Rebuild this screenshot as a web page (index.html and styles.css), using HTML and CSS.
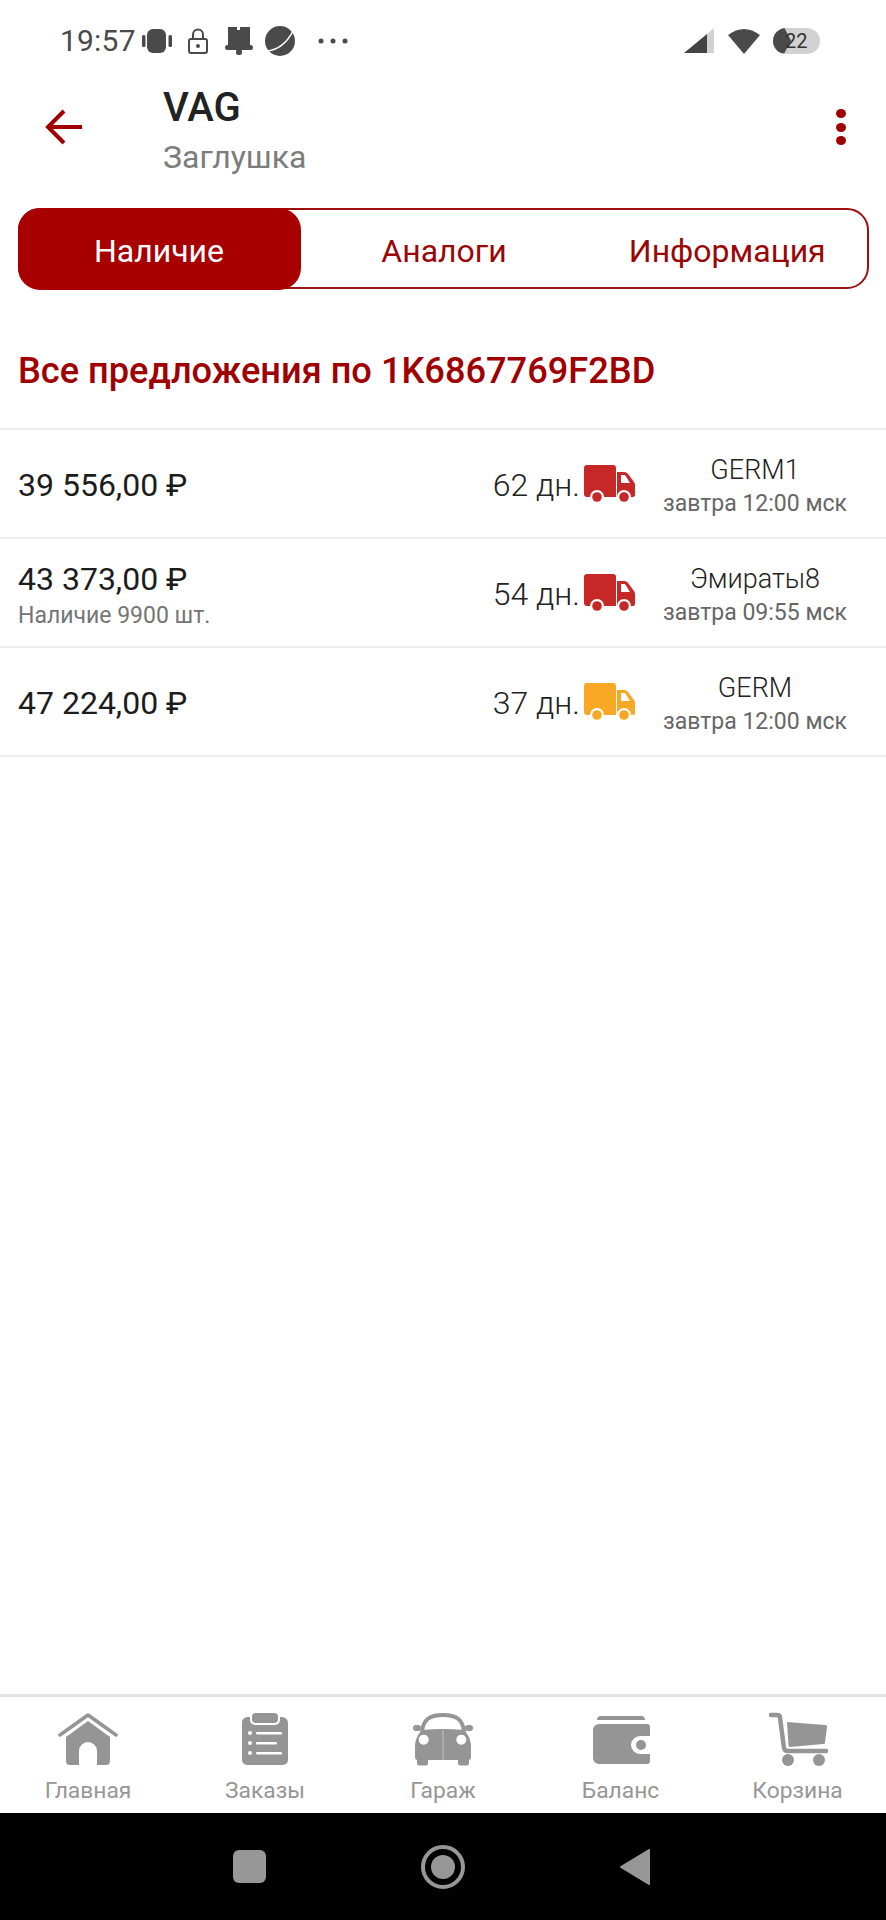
FILE: index.html
```html
<!DOCTYPE html>
<html lang="ru">
<head>
<meta charset="utf-8">
<title>VAG</title>
<link rel="stylesheet" href="styles.css">
</head>
<body>
<div class="page">
  <div class="status">
    <span class="time">19:57</span>
    <svg class="si" width="30" height="26" viewBox="0 0 30 26"><rect x="5" y="1" width="19" height="24" rx="6" fill="#4a4a4a"/><rect x="0" y="7" width="3.500" height="12" rx="1.500" fill="#4a4a4a"/><rect x="26.500" y="7" width="3.500" height="12" rx="1.500" fill="#4a4a4a"/></svg>
    <svg class="si lock" width="20" height="26" viewBox="0 0 20 26"><path d="M5 11V6.500a5 5 0 0 1 10 0V11" fill="none" stroke="#4a4a4a" stroke-width="2"/><rect x="1" y="11" width="18" height="14" rx="2" fill="none" stroke="#4a4a4a" stroke-width="2"/><circle cx="10" cy="18" r="2" fill="#4a4a4a"/></svg>
    <svg class="si bell" width="28" height="29" viewBox="0 0 28 29"><path d="M3 1h9v3h3V1h10v20H3z" fill="#4a4a4a"/><rect x="0" y="19" width="28" height="5" rx="2.500" fill="#4a4a4a"/><rect x="11" y="23" width="6" height="6" rx="2.500" fill="#4a4a4a"/></svg>
    <svg class="si planet" width="30" height="30" viewBox="0 0 30 30"><circle cx="15" cy="15" r="15" fill="#4a4a4a"/><path d="M1 25Q19 24 29 3" fill="none" stroke="#fff" stroke-width="1.600"/></svg>
    <svg class="si dots" width="30" height="6" viewBox="0 0 30 6"><circle cx="3" cy="3" r="2.500" fill="#4a4a4a"/><circle cx="15" cy="3" r="2.500" fill="#4a4a4a"/><circle cx="27" cy="3" r="2.500" fill="#4a4a4a"/></svg>
    <span class="spacer"></span>
    <svg width="30" height="26" viewBox="0 0 30 26"><path d="M0 25 23 6v19z" fill="#444"/><path d="M23 6l7-6v25h-7z" fill="#d2d2d2"/></svg>
    <svg class="wifi" width="32" height="26" viewBox="0 0 32 26"><path d="M0 7Q16-5 32 7L16 26z" fill="#4a4a4a"/></svg>
    <span class="battery"><span class="charge"></span><span class="level">22</span></span>
  </div>

  <header class="appbar">
    <svg class="back" width="38" height="36" viewBox="0 0 38 36"><path d="M37 18H3M19 2 3 18l16 16" fill="none" stroke="#a00000" stroke-width="4"/></svg>
    <div class="titles">
      <div class="title">VAG</div>
      <div class="subtitle">Заглушка</div>
    </div>
    <div class="more"><i></i><i></i><i></i></div>
  </header>

  <nav class="tabs">
    <div class="tab active">Наличие</div>
    <div class="tab">Аналоги</div>
    <div class="tab">Информация</div>
  </nav>

  <h1 class="heading">Все предложения по 1K6867769F2BD</h1>

  <section class="list">
    <div class="row">
      <div class="price"><div class="amount">39 556,00 ₽</div></div>
      <div class="days">62 дн.</div>
      <svg class="truck red" viewBox="0 0 51 37"><use href="#truck"/></svg>
      <div class="source"><div class="wh">GERM1</div><div class="when">завтра 12:00 мск</div></div>
    </div>
    <div class="row">
      <div class="price"><div class="amount">43 373,00 ₽</div><div class="stock">Наличие 9900 шт.</div></div>
      <div class="days">54 дн.</div>
      <svg class="truck red" viewBox="0 0 51 37"><use href="#truck"/></svg>
      <div class="source"><div class="wh">Эмираты8</div><div class="when">завтра 09:55 мск</div></div>
    </div>
    <div class="row">
      <div class="price"><div class="amount">47 224,00 ₽</div></div>
      <div class="days">37 дн.</div>
      <svg class="truck amber" viewBox="0 0 51 37"><use href="#truck"/></svg>
      <div class="source"><div class="wh">GERM</div><div class="when">завтра 12:00 мск</div></div>
    </div>
  </section>

  <footer class="tabbar">
    <div class="item">
      <svg width="60" height="54" viewBox="0 0 60 54"><path d="M2 23 30 3l28 20" fill="none" stroke="#959595" stroke-width="3.500" stroke-linecap="round" stroke-linejoin="round"/><path fill-rule="evenodd" d="M30 9 52 25v24a4 4 0 0 1-4 4h-9V39a9 9 0 0 0-18 0v14h-9a4 4 0 0 1-4-4V25z" fill="#959595"/></svg>
      <span>Главная</span>
    </div>
    <div class="item">
      <svg width="48" height="54" viewBox="0 0 48 54"><rect x="11" y="1" width="26" height="10" rx="4" fill="#959595"/><path fill-rule="evenodd" d="M7 5h2v3a5 5 0 0 0 5 5h20a5 5 0 0 0 5-5V5h2a6 6 0 0 1 6 6v37a5 5 0 0 1-5 5H6a5 5 0 0 1-5-5V11a6 6 0 0 1 5-6z" fill="#959595"/><g fill="#fff"><circle cx="9" cy="21" r="2"/><circle cx="9" cy="31" r="2"/><circle cx="9" cy="41" r="2"/><rect x="15" y="20" width="26" height="2.400" rx="1"/><rect x="15" y="30" width="21" height="2.400" rx="1"/><rect x="15" y="40" width="26" height="2.400" rx="1"/></g></svg>
      <span>Заказы</span>
    </div>
    <div class="item">
      <svg width="60" height="54" viewBox="0 0 60 54"><path d="M9 20C10 8 16 3 30 3S50 8 51 20" fill="none" stroke="#959595" stroke-width="4"/><path fill-rule="evenodd" d="M9 18Q30 16 51 18C56 23 58 29 58 35V45a3 3 0 0 1-2 3v3a2.500 2.500 0 0 1-2.500 2.500h-6A2.500 2.500 0 0 1 45 51V48H15v3a2.500 2.500 0 0 1-2.500 2.500h-6A2.500 2.500 0 0 1 4 51V48a3 3 0 0 1-2-3V35C2 29 4 23 9 18zM10.700 22.700a5 5 0 1 0 .01 0zM48.300 22.700a5 5 0 1 0 .01 0z" fill="#959595"/><rect x="0" y="13" width="8" height="6" rx="3" fill="#959595"/><rect x="52" y="13" width="8" height="6" rx="3" fill="#959595"/><path d="M30 18V48" stroke="#c4c4c4" stroke-width="1"/></svg>
      <span>Гараж</span>
    </div>
    <div class="item">
      <svg width="58" height="54" viewBox="0 0 58 54"><path d="M5 8a4 4 0 0 1 4-4h41a4 4 0 0 1 3 4z" fill="#959595"/><path fill-rule="evenodd" d="M7 12h48a3 3 0 0 1 3 3v9H48a9 9 0 0 0 0 18h10v7a3 3 0 0 1-3 3H7a6 6 0 0 1-6-6V18a6 6 0 0 1 6-6z" fill="#959595"/><circle cx="49" cy="33" r="5" fill="#959595"/></svg>
      <span>Баланс</span>
    </div>
    <div class="item">
      <svg width="60" height="54" viewBox="0 0 60 54"><path d="M3 3h6c2 0 3 1 3 3l4 30c.300 2 2 3 4 3h38" fill="none" stroke="#959595" stroke-width="4.500" stroke-linecap="round" stroke-linejoin="round"/><path d="M19 10l38 3c2 .200 2 1 2 2l-2 15c0 2-1 2-2 2l-33 3c-1 0-1.500-1-1.500-2z" fill="#959595"/><circle cx="20" cy="48" r="6" fill="#959595"/><circle cx="51" cy="48" r="6" fill="#959595"/></svg>
      <span>Корзина</span>
    </div>
  </footer>

  <div class="sysnav">
    <span class="square"></span>
    <svg class="home-key" width="44" height="44" viewBox="0 0 44 44"><circle cx="22" cy="22" r="20" fill="none" stroke="#979797" stroke-width="4"/><circle cx="22" cy="22" r="12" fill="#979797"/></svg>
    <svg class="back-key" width="32" height="38" viewBox="0 0 32 38"><path d="M30 2 2 19l28 17z" fill="#979797" stroke="#979797" stroke-width="2" stroke-linejoin="round"/></svg>
  </div>
</div>

<svg class="defs" width="0" height="0" aria-hidden="true">
  <symbol id="truck" viewBox="0 0 51 37">
    <path fill="currentColor" d="M3 0h26a3 3 0 0 1 3 3v29H20a7 7 0 0 0-14 0H3a3 3 0 0 1-3-3V3a3 3 0 0 1 3-3z"/>
    <path fill="currentColor" fill-rule="evenodd" d="M33 7h7c2 0 3 .800 4 2l6 8c.700 1 1 2 1 3v10c0 1.200-.800 2-2 2h-2a7 7 0 0 0-14 0zM37 10v8h9l-4-6.500c-.500-.800-1-1.500-2-1.500z"/>
    <circle fill="currentColor" cx="13" cy="32" r="4.800"/>
    <circle fill="currentColor" cx="40" cy="32" r="4.800"/>
  </symbol>
</svg>
</body>
</html>
```

FILE: styles.css
```css
* { box-sizing: border-box; }
html, body { margin: 0; padding: 0; background: #fff; }
body { font-family: Roboto, "Noto Sans", sans-serif; }
.defs { display: block; height: 0; overflow: hidden; }

.page { width: 886px; height: 1920px; display: flex; flex-direction: column; overflow: hidden; }

.status { height: 70px; padding: 11px 66px 0 60px; display: flex; align-items: center; color: #4a4a4a; }
.time { font-size: 30px; width: 82px; letter-spacing: .2px; flex: none; }
.si { flex: none; }
.lock { margin-left: 16px; }
.bell { margin-left: 17px; }
.planet { margin-left: 12px; }
.dots { margin-left: 23px; }
.spacer { flex: 1; }
.wifi { margin: 0 13px 0 14px; }
.battery { position: relative; display: block; width: 47px; height: 26px; background: #d2d2d2; border-radius: 13px; }
.charge { position: absolute; left: 0; top: 0; width: 18px; height: 26px; background: #4a4a4a; border-radius: 13px 4px 4px 13px; clip-path: polygon(0 0, 62% 0, 100% 50%, 62% 100%, 0 100%); }
.level { position: absolute; left: 12px; top: -2px; font-size: 20px; line-height: 30px; color: #333; }

.appbar { height: 108px; display: flex; align-items: flex-start; }
.back { flex: none; margin: 39px 0 0 45px; }
.titles { margin-left: 80px; flex: 1; padding-top: 15px; }
.title { font-size: 40px; font-weight: 500; color: #222; line-height: 46px; }
.subtitle { font-size: 32px; color: #7c7c7c; line-height: 40px; margin-top: 6px; }
.more { width: 10px; margin: 39px 40px 0 0; display: flex; flex-direction: column; gap: 4.500px; }
.more i { display: block; width: 10px; height: 9px; border-radius: 50%; background: #a00000; }

.tabs { margin: 30px 17px 0 18px; height: 81px; border: 2.500px solid #9c1010; border-radius: 22px; display: flex; }
.tab { display: flex; align-items: center; justify-content: center; font-size: 32px; color: #9a0606; padding-top: 4px; }
.tab:nth-child(1) { width: 283px; margin: -2.500px 0 -2.500px -2.500px; }
.tab:nth-child(2) { width: 287px; }
.tab:nth-child(3) { flex: 1; }
.tab.active { background: #a80000; color: #fff; border-radius: 22px; }

.heading { margin: 61px 18px 0; font-size: 36.200px; line-height: 42px; font-weight: 500; color: #a00000; white-space: nowrap; }

.list { margin-top: 36px; flex: 1; }
.row { height: 109px; border-top: 2px solid #ececec; display: flex; align-items: center; padding: 4px 11px 0 18px; }
.row:last-child { height: 111px; border-bottom: 2px solid #ececec; }
.price { flex: 1; }
.amount { font-size: 32px; line-height: 38px; color: #1c1c1c; padding-bottom: 2px; }
.stock { font-size: 23px; line-height: 28px; color: #757575; margin-top: 2px; }
.days { font-size: 32px; font-weight: 300; color: #222; margin: 0 4px 2px 0; }
.truck { width: 51px; height: 37px; flex: none; margin-top: -4px; }
.red { color: #c62828; }
.amber { color: #f9a825; }
.source { width: 240px; text-align: center; flex: none; }
.wh { font-size: 27px; font-weight: 300; line-height: 34px; color: #222; white-space: nowrap; }
.when { font-size: 23px; line-height: 30px; color: #666; white-space: nowrap; margin-top: 2px; }

.tabbar { height: 119px; flex: none; border-top: 3px solid #e3e3e3; display: grid; grid-template-columns: 176px 178px 178px 177px 177px; }
.item { display: flex; flex-direction: column; align-items: center; padding-top: 15px; color: #969696; font-size: 22.800px; }
.item svg { flex: none; }
.item span { line-height: 30px; margin-top: 10px; }

.sysnav { height: 107px; flex: none; background: #000; display: flex; align-items: center; padding-left: 233px; }
.square { width: 33px; height: 33px; background: #979797; border-radius: 6px; flex: none; }
.home-key { margin-left: 155px; flex: none; }
.back-key { margin-left: 154px; flex: none; }
```
